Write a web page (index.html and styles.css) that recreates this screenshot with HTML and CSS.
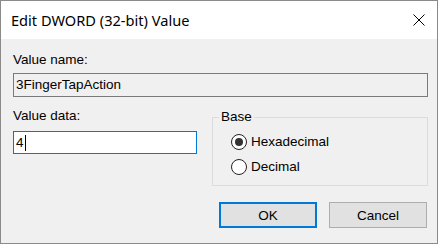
FILE: index.html
```html
<!DOCTYPE html>
<html lang="en">
<head>
  <meta charset="UTF-8">
  <title>Edit DWORD (32-bit) Value</title>
  <link rel="stylesheet" href="styles.css">
</head>
<body>
  <div class="dialog">
    <div class="titlebar">
      <span class="title">Edit DWORD (32-bit) Value</span>
      <svg class="close" width="12" height="12" viewBox="0 0 12 12">
        <path d="M0.5 0.5 L11.5 11.5 M11.5 0.5 L0.5 11.5" stroke="#000" stroke-width="1" fill="none"/>
      </svg>
    </div>

    <div class="content">
      <div class="caption">Value name:</div>
      <div class="field readonly">3FingerTapAction</div>

      <div class="row">
        <div class="data">
          <div class="caption">Value data:</div>
          <div class="field active">4<span class="caret"></span></div>
        </div>

        <fieldset class="base">
          <legend>Base</legend>
          <div class="options">
            <div class="option"><span class="radio checked"></span>Hexadecimal</div>
            <div class="option"><span class="radio"></span>Decimal</div>
          </div>
        </fieldset>
      </div>

      <div class="buttons">
        <button class="default">OK</button>
        <button>Cancel</button>
      </div>
    </div>
  </div>
</body>
</html>
```

FILE: styles.css
```css
* {
  margin: 0;
  padding: 0;
  box-sizing: border-box;
}

body {
  background-color: #ffffff;
  font-family: "Liberation Sans", Arial, sans-serif;
  font-size: 13.5px;
  color: #000;
}

.dialog {
  width: 438px;
  height: 244px;
  border: 1px solid #8a8a8a;
  display: flex;
  flex-direction: column;
  background-color: #f0f0f0;
}

.titlebar {
  height: 38px;
  background-color: #ffffff;
  display: flex;
  align-items: center;
  justify-content: space-between;
  padding: 0 12px 0 10px;
}

.title {
  font-family: "Noto Sans", sans-serif;
  font-size: 14.6px;
}

.content {
  flex: 1;
  padding: 13px 9px 0 12px;
}

.caption {
  line-height: 16px;
}

.field {
  height: 24px;
  margin-top: 5px;
  padding-left: 2px;
  line-height: 22px;
  border: 1px solid #7a7a7a;
  display: flex;
  align-items: center;
}

.field.readonly {
  background-color: #f0f0f0;
}

.field.active {
  height: 23px;
  margin-top: 7px;
  background-color: #ffffff;
  border-color: #0078d7;
}

.caret {
  width: 1px;
  height: 16px;
  margin-left: 1px;
  background-color: #000;
}

.row {
  display: grid;
  grid-template-columns: 184px 1fr;
  column-gap: 15px;
  margin-top: 11px;
}

.base {
  margin-top: 1px;
  border: 1px solid #dcdcdc;
  padding: 4px 0 6px 6px;
}

.base legend {
  padding: 0 2px;
  line-height: 16px;
}

.options {
  padding-left: 12px;
}

.option {
  height: 25px;
  display: flex;
  align-items: center;
  gap: 4px;
}

.radio {
  width: 16px;
  height: 16px;
  border: 1px solid #222;
  border-radius: 50%;
  background-color: #fff;
  display: flex;
  align-items: center;
  justify-content: center;
}

.radio.checked {
  border-width: 1.5px;
}

.radio.checked::after {
  content: "";
  width: 8px;
  height: 8px;
  border-radius: 50%;
  background-color: #333;
}

.buttons {
  display: flex;
  justify-content: flex-end;
  gap: 12px;
  margin-top: 16px;
  padding-right: 1px;
}

button {
  width: 98px;
  height: 26px;
  background-color: #e1e1e1;
  border: 1px solid #adadad;
  font-family: "Liberation Sans", Arial, sans-serif;
  font-size: 13.5px;
  color: #000;
}

button.default {
  border: 2px solid #0078d7;
}
```
